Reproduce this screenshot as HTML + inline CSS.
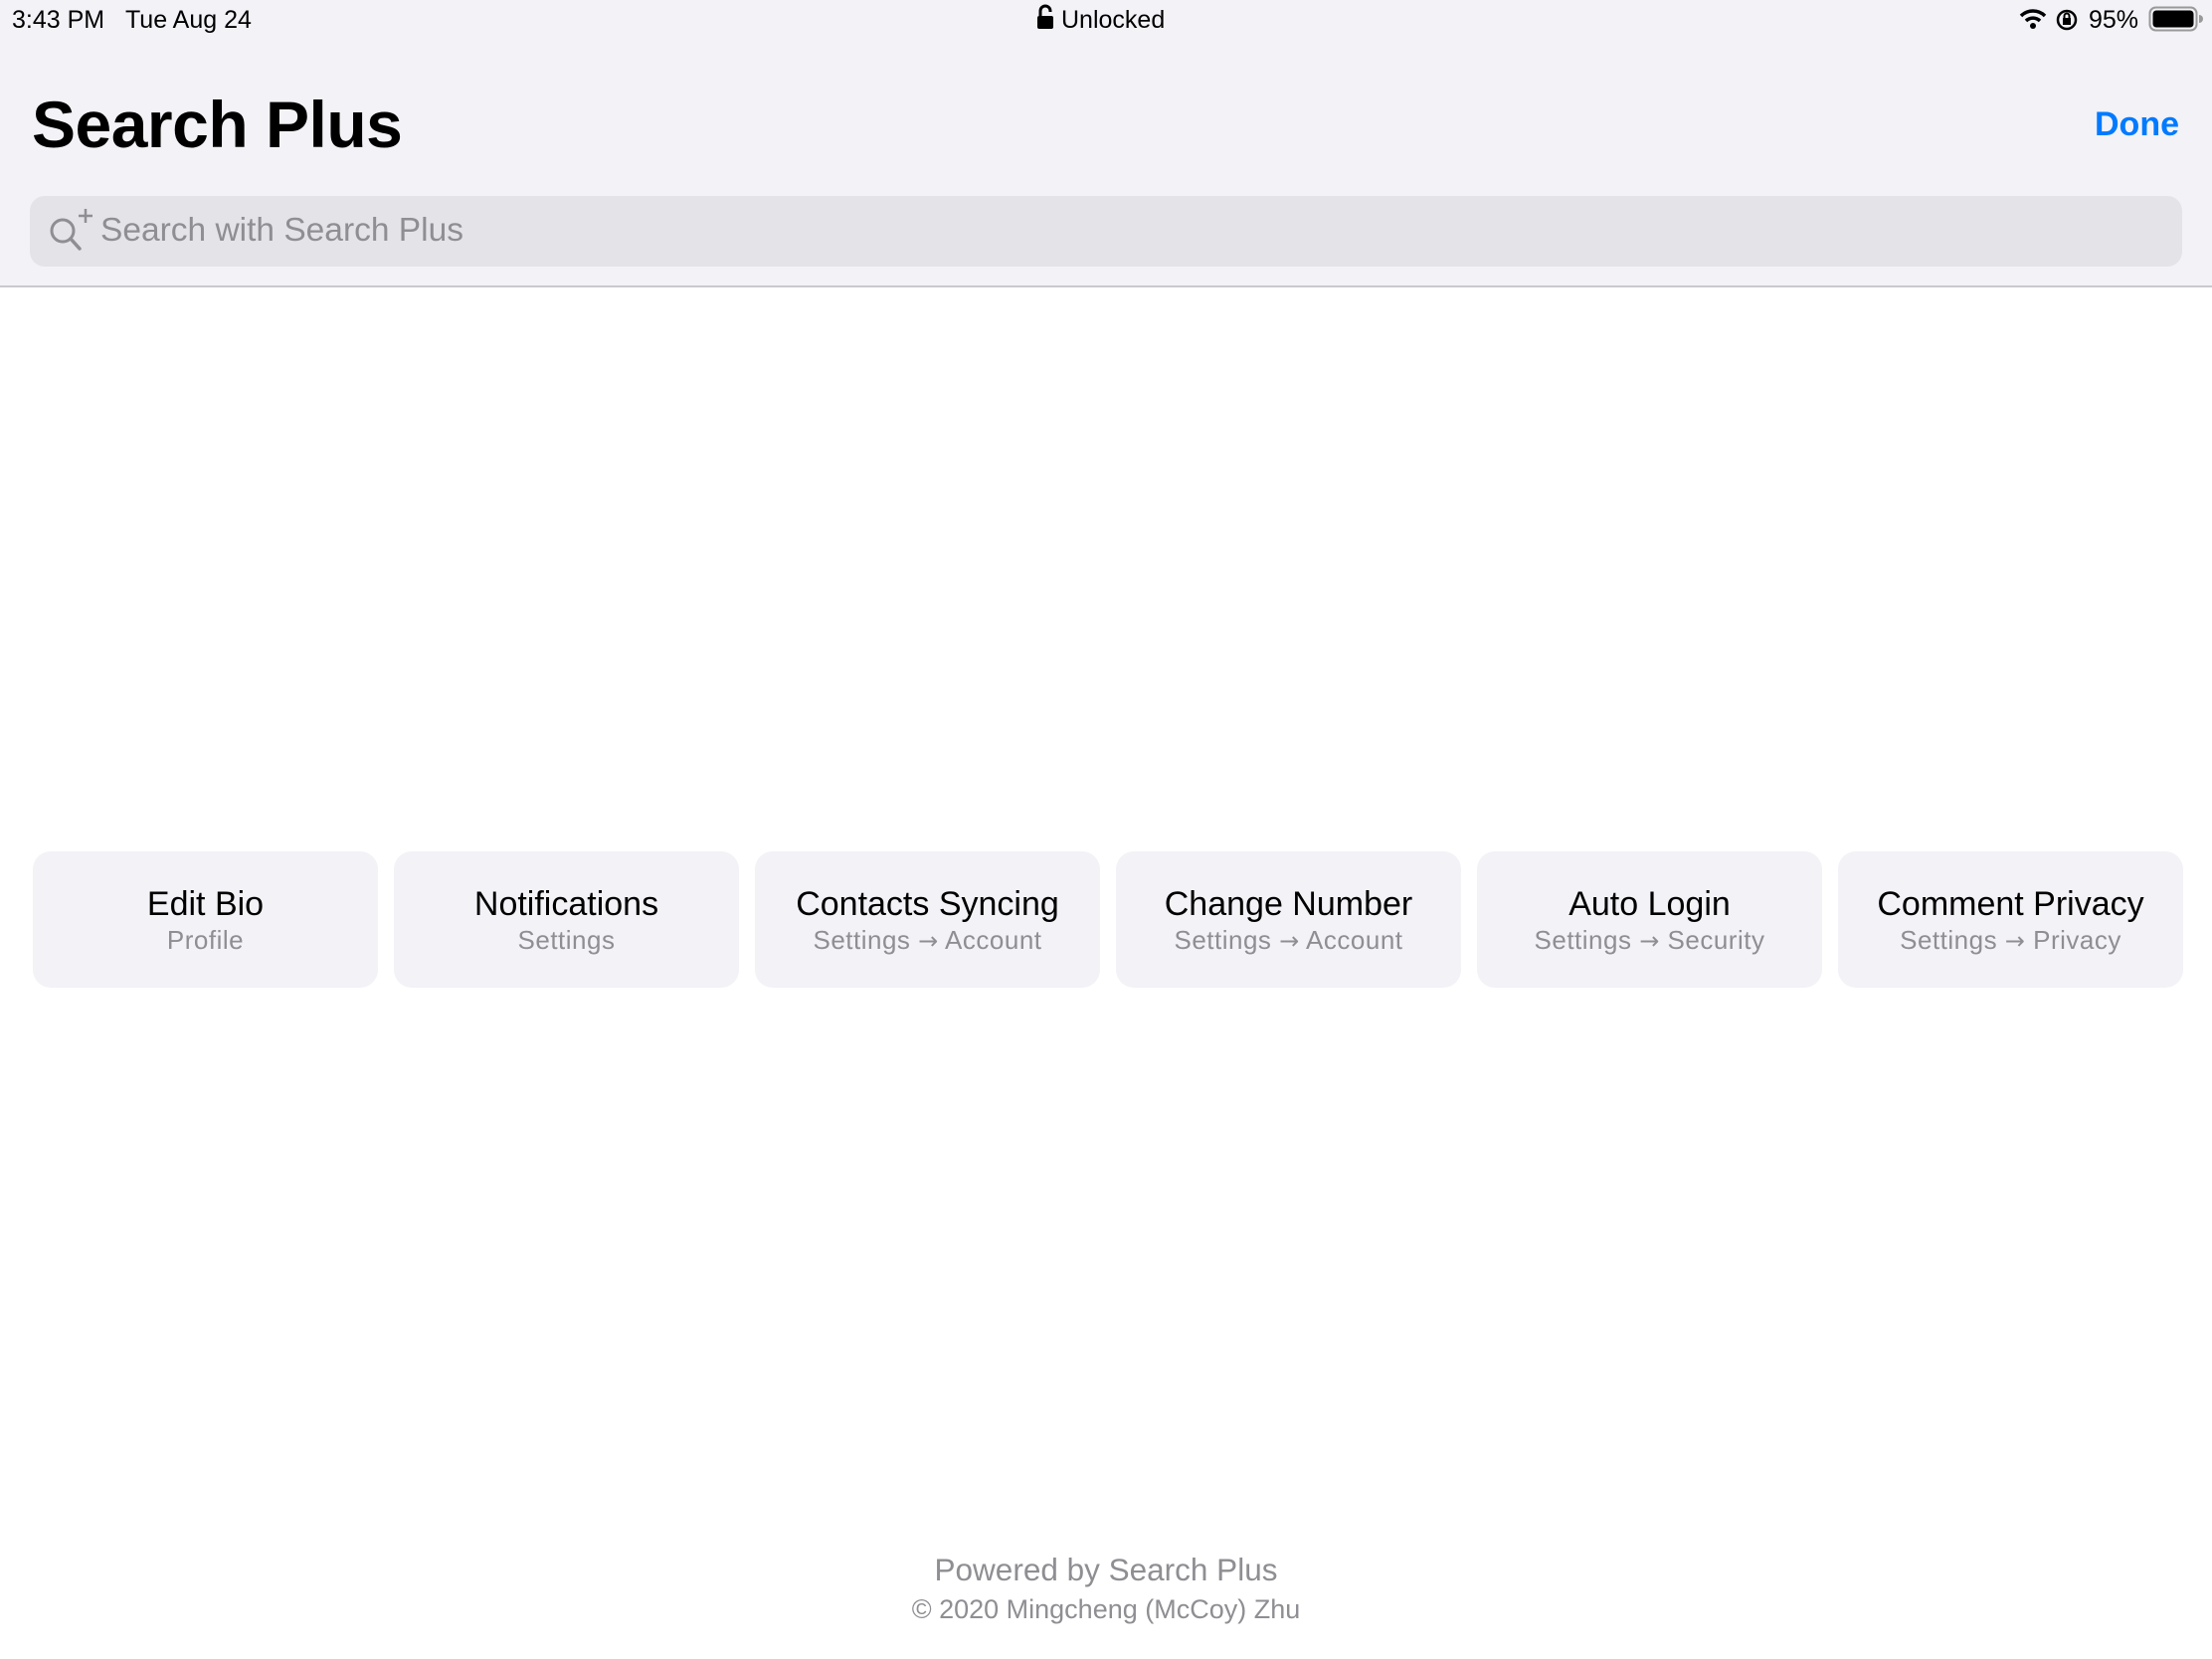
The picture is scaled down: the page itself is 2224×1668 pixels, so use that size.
<!DOCTYPE html>
<html><head><meta charset="utf-8"><style>
*{margin:0;padding:0;box-sizing:border-box}
body{width:2224px;height:1668px;background:#fff;font-family:"Liberation Sans",sans-serif;position:relative;overflow:hidden}
.hdr{position:absolute;left:0;top:0;width:2224px;height:289px;background:#f2f2f7;border-bottom:2px solid #c9c9ce}
.abs{position:absolute;white-space:nowrap}
.sb{font-size:25px;color:#000;top:6px}
.title{left:32px;top:87px;font-size:66px;font-weight:bold;color:#000;letter-spacing:-0.5px}
.done{right:33px;top:106px;font-size:34px;font-weight:bold;color:#007aff}
.search{position:absolute;left:30px;top:197px;width:2164px;height:71px;background:#e3e3e8;border-radius:15px}
.ph{left:101px;top:213px;font-size:33.5px;color:#8e8e93}
.card{position:absolute;top:856px;width:347px;height:137px;background:#f2f2f7;border-radius:18px;text-align:center}
.card .t{position:absolute;left:0;right:0;top:34px;font-size:34px;color:#000}
.card .s{position:absolute;left:0;right:0;top:74px;font-size:26px;color:#8e8e93;letter-spacing:0.5px}
.card .s b{font-weight:normal;font-family:"DejaVu Sans",sans-serif;font-size:24px}
.f1{left:0;width:2224px;text-align:center;top:1560px;font-size:31.5px;color:#8e8e93}
.f2{left:0;width:2224px;text-align:center;top:1603px;font-size:27px;color:#8e8e93}
</style></head><body>
<div class="hdr"></div>
<div class="abs sb" style="left:12px">3:43 PM&nbsp;&nbsp;&nbsp;Tue Aug 24</div>
<svg class="abs" style="left:1042px;top:4px" width="18" height="26" viewBox="0 0 18 26"><path d="M4 12V7a5 5 0 0 1 10 0v1" fill="none" stroke="#000" stroke-width="3"/><rect x="1" y="12" width="16" height="13" rx="2" fill="#000"/></svg>
<div class="abs sb" style="left:1067px">Unlocked</div>
<svg class="abs" style="left:2030px;top:8px" width="28" height="22" viewBox="0 0 28 22"><path d="M2 8a17 17 0 0 1 24 0" fill="none" stroke="#000" stroke-width="3.5"/><path d="M7 13a10 10 0 0 1 14 0" fill="none" stroke="#000" stroke-width="3.5"/><circle cx="14" cy="18" r="3" fill="#000"/></svg>
<svg class="abs" style="left:2066px;top:8px" width="24" height="24" viewBox="0 0 24 24"><circle cx="12" cy="12" r="9" fill="none" stroke="#000" stroke-width="2.5"/><rect x="8" y="10" width="8" height="7" fill="#000"/><path d="M9.5 10V8a2.5 2.5 0 0 1 5 0v2" fill="none" stroke="#000" stroke-width="2"/></svg>
<div class="abs sb" style="left:2100px">95%</div>
<svg class="abs" style="left:2160px;top:6px" width="56" height="26" viewBox="0 0 56 26"><rect x="1.5" y="1.5" width="47" height="23" rx="6" fill="none" stroke="#999" stroke-width="2"/><rect x="4.5" y="4.5" width="41" height="17" rx="3.5" fill="#000"/><path d="M51 9v8a3 3 0 0 0 0-8z" fill="#999"/></svg>
<div class="abs title">Search Plus</div>
<div class="abs done">Done</div>
<div class="search"></div>
<svg class="abs" style="left:48px;top:208px" width="48" height="46" viewBox="0 0 48 46"><circle cx="15" cy="24" r="11" fill="none" stroke="#8e8e93" stroke-width="3"/><path d="M23 32l9 10" stroke="#8e8e93" stroke-width="3.5" stroke-linecap="round"/><path d="M38 2v14M31 9h14" stroke="#8e8e93" stroke-width="2.5"/></svg>
<div class="abs ph">Search with Search Plus</div>

<div class="card" style="left:33px"><div class="t">Edit Bio</div><div class="s">Profile</div></div>
<div class="card" style="left:396px"><div class="t">Notifications</div><div class="s">Settings</div></div>
<div class="card" style="left:759px"><div class="t">Contacts Syncing</div><div class="s">Settings <b>→</b> Account</div></div>
<div class="card" style="left:1122px"><div class="t">Change Number</div><div class="s">Settings <b>→</b> Account</div></div>
<div class="card" style="left:1485px"><div class="t">Auto Login</div><div class="s">Settings <b>→</b> Security</div></div>
<div class="card" style="left:1848px"><div class="t">Comment Privacy</div><div class="s">Settings <b>→</b> Privacy</div></div>

<div class="abs f1">Powered by Search Plus</div>
<div class="abs f2">© 2020 Mingcheng (McCoy) Zhu</div>
</body></html>
